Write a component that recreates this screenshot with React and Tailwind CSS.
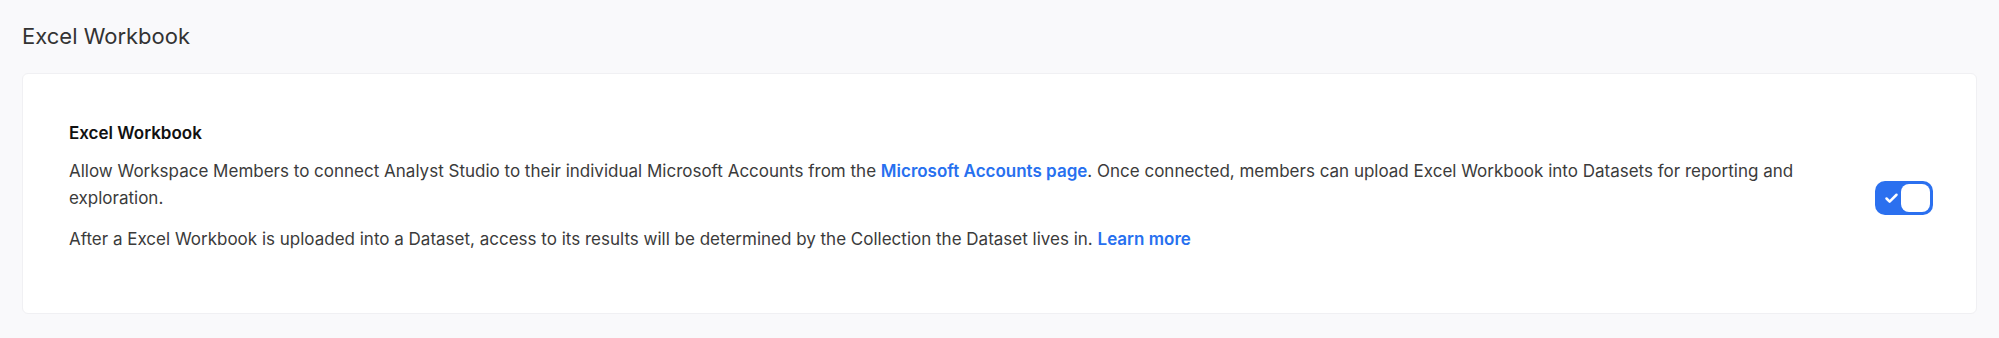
import { Check } from 'lucide-react';

function Toggle() {
  return (
    <div className="mt-[8px] flex h-[34px] w-[58px] shrink-0 items-center justify-between rounded-[10px] bg-[#2b70ef] p-[3px]">
      <Check className="ml-[6px] h-[15px] w-[15px] text-white" strokeWidth={4} />
      <div className="h-[28px] w-[29px] rounded-[8px] bg-white" />
    </div>
  );
}

export default function App() {
  return (
    <div className="min-h-[338px] bg-[#f9f9fb] px-[22px] pt-[20px] pb-[24px] font-['Inter',sans-serif]">
      <h1 className="text-[22px] leading-[32px] text-[#333333]">Excel Workbook</h1>

      <div className="mt-[21px] flex items-center rounded-[6px] border border-[#f0f0f3] bg-white pt-[47px] pr-[43px] pb-[46px] pl-[46px]">
        <div className="flex-1 pr-[40px]">
          <h2 className="text-[17px] font-semibold leading-[24px] text-[#111111]">Excel Workbook</h2>
          <p className="mt-[13px] text-[17px] leading-[27px] text-[#3b3b3b]">
            Allow Workspace Members to connect Analyst Studio to their individual Microsoft Accounts from the{' '}
            <a className="font-semibold text-[#2770ef]">Microsoft Accounts page</a>. Once connected, members can upload
            Excel Workbook into Datasets for reporting and exploration.
          </p>
          <p className="mt-[14px] mb-[14px] text-[17px] leading-[27px] text-[#3b3b3b]">
            After a Excel Workbook is uploaded into a Dataset, access to its results will be determined by the Collection
            the Dataset lives in. <a className="font-semibold text-[#2770ef]">Learn more</a>
          </p>
        </div>
        <Toggle />
      </div>
    </div>
  );
}
